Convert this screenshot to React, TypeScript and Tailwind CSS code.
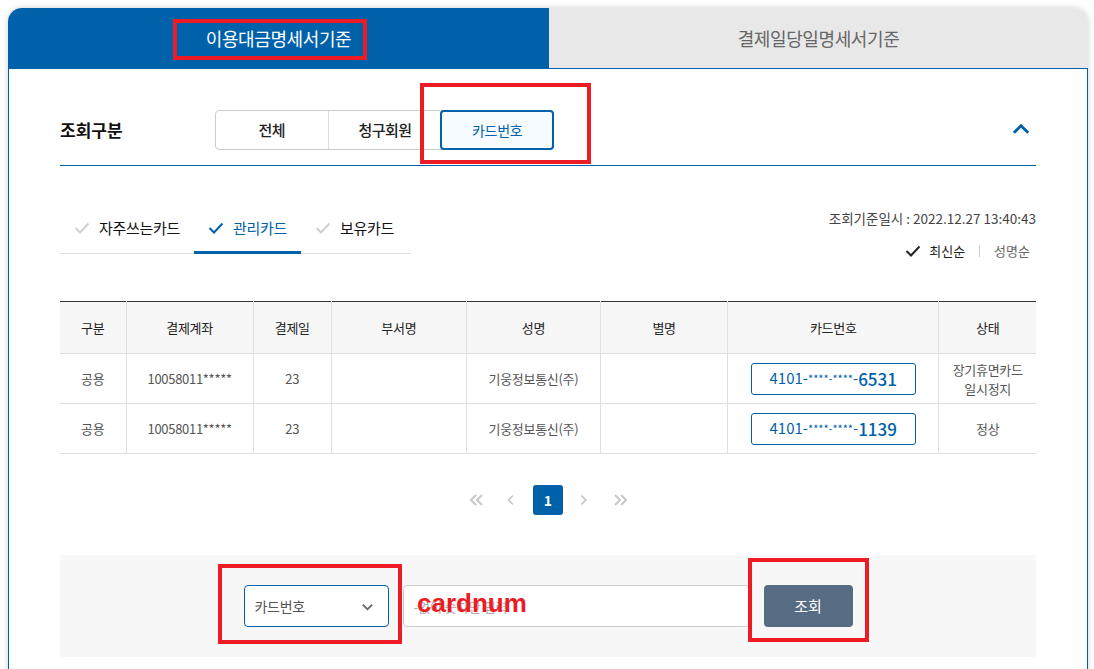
import { useState } from "react";

const BLUE = "#0061ab";

function Check({ color, className = "" }: { color: string; className?: string }) {
  return (
    <svg width="16" height="12" viewBox="0 0 16 12" className={className} fill="none">
      <polyline points="1.5,6 6,10.5 14.5,1.5" stroke={color} strokeWidth="2" />
    </svg>
  );
}

function Chevron({ dir, color, size = 12 }: { dir: "left" | "right" | "up" | "down"; color: string; size?: number }) {
  const pts = {
    left: "8,2 3,7 8,12",
    right: "4,2 9,7 4,12",
    up: "2,9 7,4 12,9",
    down: "2,5 7,10 12,5",
  }[dir];
  return (
    <svg width={size} height={size} viewBox="0 0 14 14" fill="none">
      <polyline points={pts} stroke={color} strokeWidth="2" />
    </svg>
  );
}

function DoubleChevron({ dir, color }: { dir: "left" | "right"; color: string }) {
  const a = dir === "left" ? "7,2 2,7 7,12" : "2,2 7,7 2,12";
  const b = dir === "left" ? "13,2 8,7 13,12" : "8,2 13,7 8,12";
  return (
    <svg width="15" height="14" viewBox="0 0 15 14" fill="none">
      <polyline points={a} stroke={color} strokeWidth="2" />
      <polyline points={b} stroke={color} strokeWidth="2" />
    </svg>
  );
}

const rows = [
  { type: "공용", acct: "10058011*****", day: "23", dept: "", name: "기웅정보통신(주)", nick: "", last: "6531", status: ["장기휴면카드", "일시정지"] },
  { type: "공용", acct: "10058011*****", day: "23", dept: "", name: "기웅정보통신(주)", nick: "", last: "1139", status: ["정상"] },
];

const cols = [66, 127, 78, 135, 134, 127, 211, 97];
const heads = ["구분", "결제계좌", "결제일", "부서명", "성명", "별명", "카드번호", "상태"];

export default function App() {
  const [kind, setKind] = useState("카드번호");
  const [cardTab, setCardTab] = useState("관리카드");

  return (
    <div className="relative min-h-[669px] bg-white pl-2 pt-2 font-['Noto_Sans_CJK_KR','Noto_Sans',sans-serif] text-[#333]">
      <div className="w-[1080px] rounded-t-[14px] shadow-[0_0_6px_rgba(0,0,0,0.18)]">
        {/* Top tabs */}
        <div className="flex h-[61px]">
          <div className="flex w-[541px] items-center justify-center rounded-tl-[14px] bg-[#0061ab] text-[18px] tracking-[-0.4px] text-white">
            이용대금명세서기준
          </div>
          <div className="flex flex-1 items-center justify-center rounded-tr-[14px] border-b border-[#0061ab] bg-[#e8e8e8] text-[18px] tracking-[-0.4px] text-[#666]">
            결제일당일명세서기준
          </div>
        </div>

        <div className="border-x border-[#0061ab] bg-white px-[51px] pb-[40px]">
          {/* 조회구분 */}
          <div className="flex items-center border-b border-[#0061ab] pb-[15px] pt-[41px]">
            <div className="w-[155px] text-[17px] font-bold text-[#111]">조회구분</div>
            <div className="flex h-[40px] w-[339px] rounded-[4px] border border-[#ccc]">
              {["전체", "청구회원", "카드번호"].map((k, i) => (
                <button
                  key={k}
                  onClick={() => setKind(k)}
                  className={
                    kind === k
                      ? "-m-px flex w-[114px] items-center justify-center rounded-[4px] border-2 border-[#0061ab] bg-[#f5fbff] text-[14px] tracking-[-0.3px] text-[#0061ab]"
                      : `flex w-[113px] items-center justify-center text-[15px] font-medium tracking-[-0.5px] text-[#222] ${i === 0 ? "border-r border-[#ddd]" : ""}`
                  }
                >
                  {k}
                </button>
              ))}
            </div>
            <div className="ml-auto mr-[5px]">
              <Chevron dir="up" color={BLUE} size={20} />
            </div>
          </div>

          {/* card tabs + info */}
          <div className="mt-[42px] flex items-start justify-between">
            <div className="mt-[10px] flex w-[351px] border-b border-[#dcdcdc]">
              {["자주쓰는카드", "관리카드", "보유카드"].map((t) => {
                const on = cardTab === t;
                return (
                  <button
                    key={t}
                    onClick={() => setCardTab(t)}
                    className={`-mb-px flex h-[36px] items-start gap-[9px] border-b-[3px] px-[14px] text-[15px] leading-[20px] tracking-[-0.3px] ${
                      on ? "border-[#0061ab] text-[#0061ab]" : "border-transparent text-[#111]"
                    }`}
                  >
                    <Check color={on ? BLUE : "#d0d0d0"} className="mt-[4px]" />
                    {t}
                  </button>
                );
              })}
            </div>
            <div className="flex flex-col items-end text-[13.5px] leading-[20px]">
              <div className="text-[#444]">조회기준일시 : 2022.12.27 13:40:43</div>
              <div className="mt-[13px] flex items-center pr-[6px] text-[13px]">
                <Check color="#222" className="mr-[8px]" />
                <span className="text-[#222]">최신순</span>
                <span className="mx-[14px] h-[12px] w-px bg-[#ccc]" />
                <span className="text-[#666]">성명순</span>
              </div>
            </div>
          </div>

          {/* table */}
          <table className="mt-[40px] w-full table-fixed border-collapse text-[13px] tracking-[-0.3px]">
            <colgroup>
              {cols.map((w, i) => (
                <col key={i} style={{ width: w }} />
              ))}
            </colgroup>
            <thead>
              <tr className="h-[52px] border-y border-t-[#333] border-b-[#ddd] bg-[#f7f7f7]">
                {heads.map((h, i) => (
                  <th key={h} className={`font-normal text-[#222] ${i > 0 ? "border-l border-[#e0e0e0]" : ""}`}>
                    {h}
                  </th>
                ))}
              </tr>
            </thead>
            <tbody className="text-[#555]">
              {rows.map((r) => (
                <tr key={r.last} className="h-[50px] border-b border-[#ddd] text-center">
                  <td>{r.type}</td>
                  <td className="border-l border-[#e0e0e0]">{r.acct}</td>
                  <td className="border-l border-[#e0e0e0]">{r.day}</td>
                  <td className="border-l border-[#e0e0e0]">{r.dept}</td>
                  <td className="border-l border-[#e0e0e0]">{r.name}</td>
                  <td className="border-l border-[#e0e0e0]">{r.nick}</td>
                  <td className="border-l border-[#e0e0e0]">
                    <div className="mx-auto flex h-[32px] w-[165px] items-center justify-center rounded-[3px] border border-[#0061ab] tracking-normal text-[#0061ab]">
                      <span className="text-[15px]">4101-</span>
                      <span className="text-[11px]">****-****</span>
                      <span className="text-[15px]">-</span>
                      <span className="text-[17px] font-medium">{r.last}</span>
                    </div>
                  </td>
                  <td className="border-l border-[#e0e0e0] leading-[19px]">
                    {r.status.map((s) => (
                      <div key={s}>{s}</div>
                    ))}
                  </td>
                </tr>
              ))}
            </tbody>
          </table>

          {/* paging */}
          <div className="mt-[31px] flex items-center justify-center gap-[6px]">
            <span className="flex w-[30px] justify-center"><DoubleChevron dir="left" color="#c8c8c8" /></span>
            <span className="flex w-[30px] justify-center"><Chevron dir="left" color="#c8c8c8" /></span>
            <span className="flex h-[30px] w-[30px] items-center justify-center rounded-[3px] bg-[#0061ab] text-[14px] font-bold text-white">1</span>
            <span className="flex w-[30px] justify-center"><Chevron dir="right" color="#c8c8c8" /></span>
            <span className="flex w-[30px] justify-center"><DoubleChevron dir="right" color="#c8c8c8" /></span>
          </div>

          {/* search */}
          <div className="mt-[40px] flex items-center justify-center gap-[14px] bg-[#f7f7f7] py-[30px]">
            <div className="flex h-[42px] w-[145px] items-center justify-between rounded-[4px] border border-[#0061ab] bg-white pl-[10px] pr-[14px] text-[14px] tracking-[-0.3px] text-[#555]">
              카드번호
              <Chevron dir="down" color="#666" size={13} />
            </div>
            <input
              className="h-[42px] w-[347px] rounded-[4px] border border-[#ccc] bg-white px-[10px] text-[13px] outline-none placeholder:text-[#aaa]"
              placeholder="-없이 숫자만 입력"
            />
            <button className="h-[42px] w-[89px] rounded-[4px] bg-[#566c83] text-[15px] text-white">조회</button>
          </div>
        </div>
      </div>

      {/* red annotation overlays */}
      <div className="pointer-events-none absolute left-[173px] top-[19px] h-[41px] w-[194px] border-[4px] border-[#ed1c24]" />
      <div className="pointer-events-none absolute left-[420px] top-[83px] h-[81px] w-[171px] border-[4px] border-[#ed1c24]" />
      <div className="pointer-events-none absolute left-[218px] top-[564px] h-[80px] w-[184px] border-[4px] border-[#ed1c24]" />
      <div className="pointer-events-none absolute left-[748px] top-[558px] h-[84px] w-[121px] border-[4px] border-[#ed1c24]" />
      <div className="pointer-events-none absolute left-[417px] top-[588px] font-['Liberation_Sans',Arial,sans-serif] text-[26px] font-bold leading-[30px] text-[#ed1c24]">
        cardnum
      </div>
    </div>
  );
}
